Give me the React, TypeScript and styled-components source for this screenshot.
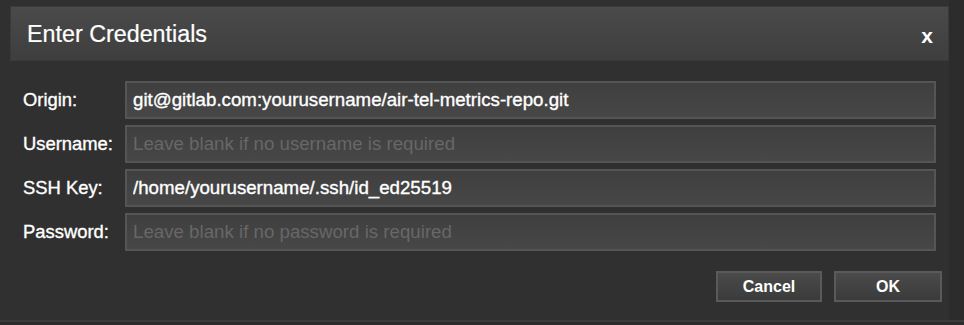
import * as React from "react";
import styled, { createGlobalStyle } from "styled-components";

const Global = createGlobalStyle`
  html, body {
    margin: 0;
    padding: 0;
    background: #2c2c2c;
    font-family: "Liberation Sans", Arial, sans-serif;
  }
`;

const Page = styled.div`
  width: 964px;
  height: 325px;
  display: flex;
  flex-direction: column;
  overflow: hidden;
`;

const Dialog = styled.div`
  width: 949px;
  height: 320px;
  background: #303030;
  padding-top: 6px;
  box-sizing: border-box;
  display: flex;
  flex-direction: column;
`;

const BottomEdge = styled.div`
  height: 2px;
  background: #3b3b3b;
`;

const TitleBar = styled.div`
  margin-left: 10px;
  height: 55px;
  box-sizing: border-box;
  background: linear-gradient(to bottom, #4a4a4a, #3e3e3e);
  border: 1px solid #3a3a3a;
  display: flex;
  align-items: center;
  justify-content: space-between;
  padding: 0 15px 0 16px;
`;

const Title = styled.span`
  color: #fff;
  font-size: 23.3px;
  margin-top: 2px;
  -webkit-text-stroke: 0.2px #fff;
`;

const Close = styled.span`
  color: #fff;
  font-size: 21px;
  font-weight: bold;
  margin-top: 4px;
`;

const Form = styled.div`
  display: flex;
  flex-direction: column;
  gap: 6px;
  padding: 20px 13px 0 23px;
`;

const Row = styled.div`
  display: grid;
  grid-template-columns: 102px 1fr;
  align-items: center;
`;

const Label = styled.label`
  color: #fff;
  font-size: 18.4px;
  -webkit-text-stroke: 0.35px #fff;
`;

const Field = styled.input<{ $filled: boolean }>`
  height: 38px;
  box-sizing: border-box;
  width: 100%;
  margin: 0;
  padding: 0 6px;
  background: linear-gradient(to bottom, #3f3f3f, #474747);
  border: 2px solid #555;
  color: #fff;
  font-family: inherit;
  font-size: 18.7px;
  outline: none;
  -webkit-text-stroke: ${(p) => (p.$filled ? "0.35px #fff" : "0")};

  &::placeholder {
    color: #676767;
  }
`;

const Actions = styled.div`
  display: flex;
  justify-content: flex-end;
  gap: 12px;
  padding: 20px 7px 0 0;
`;

const Button = styled.button<{ $w: number }>`
  width: ${(p) => p.$w}px;
  height: 31px;
  box-sizing: border-box;
  background: linear-gradient(to bottom, #4a4a4a, #3b3b3b);
  border: 2px solid #5a5a5a;
  color: #fff;
  font-family: inherit;
  font-size: 16px;
  font-weight: bold;
  padding: 0;
`;

const fields = [
  { label: "Origin:", value: "git@gitlab.com:yourusername/air-tel-metrics-repo.git", placeholder: "" },
  { label: "Username:", value: "", placeholder: "Leave blank if no username is required" },
  { label: "SSH Key:", value: "/home/yourusername/.ssh/id_ed25519", placeholder: "" },
  { label: "Password:", value: "", placeholder: "Leave blank if no password is required" },
];

export default function App() {
  return (
    <Page>
      <Global />
      <Dialog>
        <TitleBar>
          <Title>Enter Credentials</Title>
          <Close>x</Close>
        </TitleBar>
        <Form>
          {fields.map((f) => (
            <Row key={f.label}>
              <Label>{f.label}</Label>
              <Field $filled={f.value !== ""} defaultValue={f.value} placeholder={f.placeholder} />
            </Row>
          ))}
        </Form>
        <Actions>
          <Button $w={106}>Cancel</Button>
          <Button $w={108}>OK</Button>
        </Actions>
      </Dialog>
      <BottomEdge />
    </Page>
  );
}
